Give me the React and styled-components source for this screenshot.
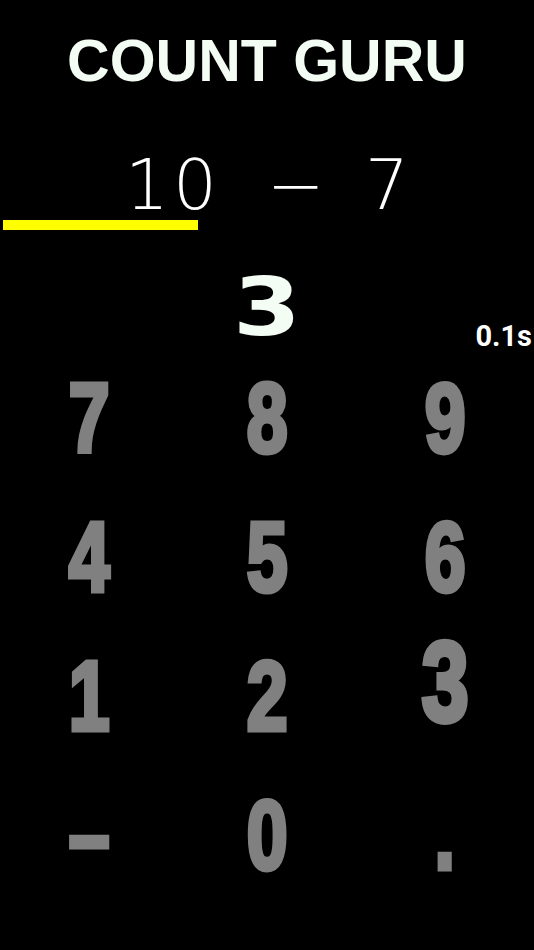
import React from "react";
import styled, { createGlobalStyle } from "styled-components";

const Global = createGlobalStyle`
  html, body { margin: 0; padding: 0; background: #000; }
  #root { min-height: 950px; background: #000; }
`;

const Screen = styled.div`
  width: 534px;
  height: 950px;
  background: #000;
  display: flex;
  flex-direction: column;
  overflow: hidden;
`;

const Title = styled.h1`
  margin: 0;
  padding-top: 32px;
  font-family: "Liberation Sans", Arial, sans-serif;
  font-weight: 700;
  font-size: 59px;
  line-height: 59px;
  color: #f4fdf4;
  text-align: center;
`;

const Expression = styled.div`
  margin-top: 64px;
  height: 60px;
  display: flex;
  justify-content: center;
  font-family: "DejaVu Sans", sans-serif;
  font-weight: 200;
  font-size: 69px;
  line-height: 60px;
  color: #fff;
`;

const Char = styled.span`
  display: inline-block;
  width: 48px;
  text-align: center;
`;

const BarTrack = styled.div`
  margin-top: 5px;
  height: 10px;
  padding-left: 3px;
  display: flex;
`;

const BarFill = styled.div`
  height: 100%;
  background: #ffff00;
`;

const AnswerRow = styled.div`
  margin-top: 38px;
  display: grid;
  grid-template-columns: 1fr auto 1fr;
  align-items: end;
`;

const Answer = styled.div`
  grid-column: 2;
  font-family: "DejaVu Sans", sans-serif;
  font-weight: 700;
  font-size: 80px;
  line-height: 80px;
  color: #f4fdf4;
  transform: scaleX(1.22);
`;

const Timer = styled.div`
  grid-column: 3;
  justify-self: end;
  padding-right: 2px;
  font-family: Roboto, "Liberation Sans", sans-serif;
  font-weight: 700;
  font-size: 29px;
  line-height: 23px;
  color: #fff;
`;

const Keypad = styled.div`
  display: grid;
  grid-template-columns: repeat(3, 1fr);
  grid-auto-rows: 139px;
`;

const Key = styled.div`
  display: flex;
  align-items: center;
  justify-content: center;
`;

const KeyGlyph = styled.span`
  display: inline-block;
  font-family: "Liberation Sans", Arial, sans-serif;
  font-weight: 700;
  font-size: 98px;
  line-height: 98px;
  color: #808080;
  -webkit-text-stroke: 5px #808080;
  transform: ${(p) => (p.$pressed ? "translateY(-14px) scale(0.86, 1.15)" : "scale(0.75, 1)")};
`;

const keys = ["7", "8", "9", "4", "5", "6", "1", "2", "3", "–", "0", "."];
const expression = ["1", "0", " ", "−", " ", "7"];

export default function App() {
  const progress = 195;
  return (
    <>
      <Global />
      <Screen>
        <Title>COUNT GURU</Title>
        <Expression>
          {expression.map((c, i) => (
            <Char key={i}>{c}</Char>
          ))}
        </Expression>
        <BarTrack>
          <BarFill style={{ width: progress + "px" }} />
        </BarTrack>
        <AnswerRow>
          <Answer>3</Answer>
          <Timer>0.1s</Timer>
        </AnswerRow>
        <Keypad>
          {keys.map((k) => (
            <Key key={k}>
              <KeyGlyph $pressed={k === "3"}>{k}</KeyGlyph>
            </Key>
          ))}
        </Keypad>
      </Screen>
    </>
  );
}
